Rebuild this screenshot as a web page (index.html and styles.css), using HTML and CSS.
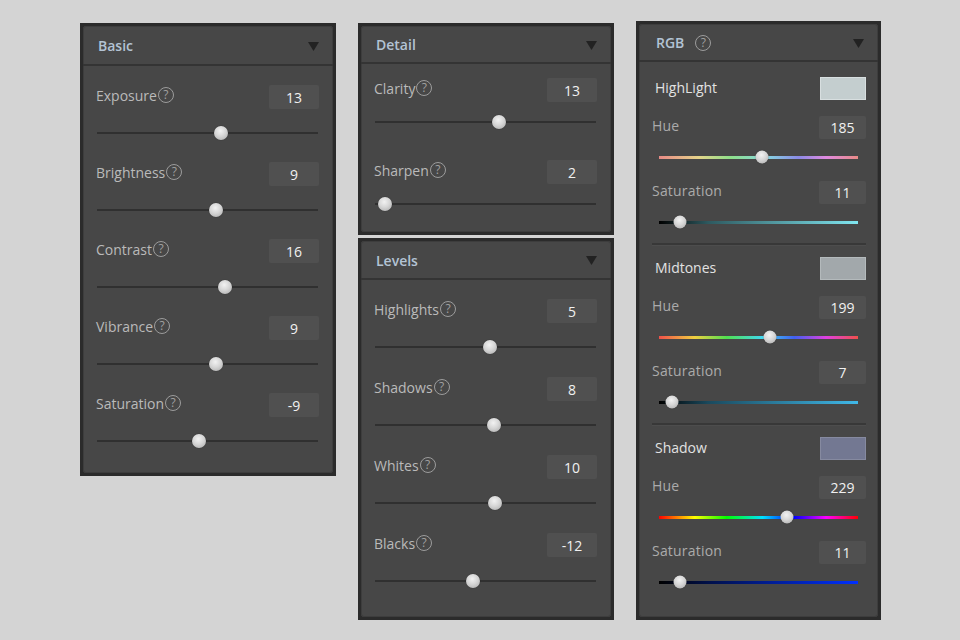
FILE: index.html
```html
<!DOCTYPE html>
<html>
<head>
<meta charset="utf-8">
<link rel="stylesheet" href="styles.css">
</head>
<body>
<div class="board">
  <!-- Basic -->
  <div class="panel basic">
    <div class="inner">
      <div class="phead"><span class="ptitle">Basic</span><svg class="caret" viewBox="0 0 11 9"><polygon points="0,0 11,0 5.5,9"/></svg></div>
      <div class="pbody">
        <div class="row">
          <div class="rhead"><span class="lbl">Exposure<span class="q">?</span></span><span class="val">13</span></div>
          <div class="slider"><div class="track"><span class="thumb" style="left:56.1%"></span></div></div>
        </div>
        <div class="row">
          <div class="rhead"><span class="lbl">Brightness<span class="q">?</span></span><span class="val">9</span></div>
          <div class="slider"><div class="track"><span class="thumb" style="left:53.8%"></span></div></div>
        </div>
        <div class="row">
          <div class="rhead"><span class="lbl">Contrast<span class="q">?</span></span><span class="val">16</span></div>
          <div class="slider"><div class="track"><span class="thumb" style="left:57.9%"></span></div></div>
        </div>
        <div class="row">
          <div class="rhead"><span class="lbl">Vibrance<span class="q">?</span></span><span class="val">9</span></div>
          <div class="slider"><div class="track"><span class="thumb" style="left:53.8%"></span></div></div>
        </div>
        <div class="row">
          <div class="rhead"><span class="lbl">Saturation<span class="q">?</span></span><span class="val">-9</span></div>
          <div class="slider"><div class="track"><span class="thumb" style="left:46.2%"></span></div></div>
        </div>
      </div>
    </div>
  </div>

  <div class="col">
    <!-- Detail -->
    <div class="panel detail">
      <div class="inner">
        <div class="phead"><span class="ptitle">Detail</span><svg class="caret" viewBox="0 0 11 9"><polygon points="0,0 11,0 5.5,9"/></svg></div>
        <div class="pbody">
          <div class="row">
            <div class="rhead"><span class="lbl">Clarity<span class="q">?</span></span><span class="val">13</span></div>
            <div class="slider"><div class="track"><span class="thumb" style="left:56.1%"></span></div></div>
          </div>
          <div class="row">
            <div class="rhead"><span class="lbl">Sharpen<span class="q">?</span></span><span class="val">2</span></div>
            <div class="slider"><div class="track"><span class="thumb" style="left:4.7%"></span></div></div>
          </div>
        </div>
      </div>
    </div>
    <!-- Levels -->
    <div class="panel levels">
      <div class="inner">
        <div class="phead"><span class="ptitle">Levels</span><svg class="caret" viewBox="0 0 11 9"><polygon points="0,0 11,0 5.5,9"/></svg></div>
        <div class="pbody">
          <div class="row">
            <div class="rhead"><span class="lbl">Highlights<span class="q">?</span></span><span class="val">5</span></div>
            <div class="slider"><div class="track"><span class="thumb" style="left:52%"></span></div></div>
          </div>
          <div class="row">
            <div class="rhead"><span class="lbl">Shadows<span class="q">?</span></span><span class="val">8</span></div>
            <div class="slider"><div class="track"><span class="thumb" style="left:53.8%"></span></div></div>
          </div>
          <div class="row">
            <div class="rhead"><span class="lbl">Whites<span class="q">?</span></span><span class="val">10</span></div>
            <div class="slider"><div class="track"><span class="thumb" style="left:54.3%"></span></div></div>
          </div>
          <div class="row">
            <div class="rhead"><span class="lbl">Blacks<span class="q">?</span></span><span class="val">-12</span></div>
            <div class="slider"><div class="track"><span class="thumb" style="left:44.2%"></span></div></div>
          </div>
        </div>
      </div>
    </div>
  </div>

  <!-- RGB -->
  <div class="panel rgb">
    <div class="inner">
      <div class="phead"><span class="ptitle">RGB<span class="q hq">?</span></span><svg class="caret" viewBox="0 0 11 9"><polygon points="0,0 11,0 5.5,9"/></svg></div>
      <div class="pbody">
        <div class="sec">
          <div class="chead"><span class="clbl">HighLight</span><span class="swatch sw-hi"></span></div>
          <div class="rrow">
            <div class="rhead"><span class="rlbl">Hue</span><span class="val">185</span></div>
            <div class="rslider"><div class="bar hue-hi"><span class="thumb" style="left:51.8%"></span></div></div>
          </div>
          <div class="rrow">
            <div class="rhead"><span class="rlbl">Saturation</span><span class="val">11</span></div>
            <div class="rslider"><div class="bar sat-hi"><span class="thumb" style="left:10.6%"></span></div></div>
          </div>
        </div>
        <div class="sep"></div>
        <div class="sec">
          <div class="chead"><span class="clbl">Midtones</span><span class="swatch sw-mid"></span></div>
          <div class="rrow">
            <div class="rhead"><span class="rlbl">Hue</span><span class="val">199</span></div>
            <div class="rslider"><div class="bar hue-mid"><span class="thumb" style="left:55.6%"></span></div></div>
          </div>
          <div class="rrow">
            <div class="rhead"><span class="rlbl">Saturation</span><span class="val">7</span></div>
            <div class="rslider"><div class="bar sat-mid"><span class="thumb" style="left:6.7%"></span></div></div>
          </div>
        </div>
        <div class="sep"></div>
        <div class="sec">
          <div class="chead"><span class="clbl">Shadow</span><span class="swatch sw-sh"></span></div>
          <div class="rrow">
            <div class="rhead"><span class="rlbl">Hue</span><span class="val">229</span></div>
            <div class="rslider"><div class="bar hue-sh"><span class="thumb" style="left:64.3%"></span></div></div>
          </div>
          <div class="rrow">
            <div class="rhead"><span class="rlbl">Saturation</span><span class="val">11</span></div>
            <div class="rslider"><div class="bar sat-sh"><span class="thumb" style="left:10.7%"></span></div></div>
          </div>
        </div>
      </div>
    </div>
  </div>
</div>
</body>
</html>
```

FILE: styles.css
```css
* { box-sizing: border-box; }
html, body { margin: 0; padding: 0; }
body {
  width: 960px;
  height: 640px;
  background: #d4d4d4;
  font-family: "Open Sans", "Noto Sans", sans-serif;
  overflow: hidden;
}
.board {
  display: flex;
  align-items: flex-start;
  gap: 22px;
  padding: 21px 0 0 80px;
}
.col {
  display: flex;
  flex-direction: column;
  gap: 3px;
  margin-top: 2px;
}
.panel {
  background: #2b2b2b;
  padding: 3px;
}
.basic { width: 256px; margin-top: 2px; }
.detail, .levels { width: 256px; }
.rgb { width: 245px; }
.inner {
  background: #474747;
  border-radius: 3px;
  box-shadow: inset 0 0 0 1px #3d3d3d;
}
.phead {
  height: 37px;
  border-bottom: 2px solid #343434;
  display: flex;
  align-items: center;
  justify-content: space-between;
  padding: 1px 14px 0 15px;
  box-sizing: content-box;
}
.detail .phead, .rgb .phead { height: 35px; }
.levels .phead { height: 36px; }
.rgb .phead { padding-left: 17px; }
.ptitle {
  font-size: 14px;
  font-weight: 600;
  color: #b3c3d4;
  display: flex;
  align-items: center;
}
.caret { width: 11px; height: 9px; fill: #222222; margin-top: 1px; }

.pbody { padding: 19px 14px 8px 13px; }
.detail .pbody { padding: 14px 14px 8px 13px; }
.levels .pbody { padding: 19px 14px 12px 13px; }

.row { display: flex; flex-direction: column; margin-bottom: 5px; }
.row:last-child { margin-bottom: 0; }
.levels .row { margin-bottom: 6px; }
.levels .row:last-child { margin-bottom: 0; }
.detail .row { margin-bottom: 18px; }
.detail .row:last-child { margin-bottom: 0; }

.rhead {
  height: 24px;
  display: flex;
  align-items: center;
  justify-content: space-between;
}
.lbl {
  font-size: 14px;
  color: #bababa;
  display: flex;
  align-items: center;
  margin-top: -4px;
}
.q {
  display: inline-flex;
  align-items: center;
  justify-content: center;
  width: 16px;
  height: 16px;
  border: 1.4px solid #9c9c9c;
  border-radius: 50%;
  font-size: 12px;
  font-weight: 400;
  color: #a0a0a0;
  margin-left: 1px;
  line-height: 1;
}
.hq { margin-left: 11px; }
.val {
  width: 50px;
  height: 24px;
  background: #505050;
  border-radius: 2px;
  color: #f0f0f0;
  font-size: 14px;
  display: flex;
  align-items: center;
  justify-content: center;
}
.slider {
  height: 48px;
  display: flex;
  align-items: center;
  padding: 0 1px;
}
.detail .slider { height: 40px; }
.track {
  position: relative;
  flex: 1;
  height: 2px;
  background: #303030;
}
.thumb {
  position: absolute;
  top: 50%;
  width: 14px;
  height: 14px;
  border-radius: 50%;
  transform: translate(-50%, -50%);
  background: radial-gradient(circle at 45% 35%, #f2f2f2 0%, #d6d6d6 45%, #a8a8a8 100%);
  box-shadow: 0 0 1px rgba(0,0,0,0.5);
}

/* RGB */
.rgb .pbody { padding: 15px 12px 17px 13px; }
.chead {
  height: 23px;
  display: flex;
  align-items: center;
  justify-content: space-between;
  margin-bottom: 16px;
}
.clbl {
  font-size: 14px;
  color: #e2e2e2;
  padding-left: 3px;
  margin-top: -2px;
}
.swatch {
  width: 46px;
  height: 23px;
  border: 1px solid #8c8c8c;
}
.sw-hi { background: #c4cecf; border-color: #d8dfe0; }
.sw-mid { background: #a2a8ab; border-color: #b4babc; }
.sw-sh { background: #737892; border-color: #868aa0; }
.rrow { display: flex; flex-direction: column; margin-bottom: 6px; }
.rrow:last-child { margin-bottom: 0; }
.rgb .rhead { height: 23px; }
.rgb .val { width: 47px; height: 23px; }
.rlbl {
  font-size: 14px;
  color: #ababab;
  margin-top: -4px;
  letter-spacing: 0.2px;
}
.rslider {
  height: 36px;
  display: flex;
  align-items: center;
  padding: 0 8px 0 7px;
}
.bar {
  position: relative;
  flex: 1;
  height: 3px;
}
.bar .thumb { width: 13px; height: 13px; }
.hue-hi { background: linear-gradient(to right, #e88a86, #e5d48a 20%, #8ee08a 36%, #86d6e0 54%, #8a8ae6 70%, #e08ae0 84%, #e88a86); }
.hue-mid { background: linear-gradient(to right, #f0504a, #f0d040 18%, #50e050 34%, #40d8f0 52%, #4060f0 68%, #e040e0 84%, #f0504a); }
.hue-sh { background: linear-gradient(to right, #ff0000, #ffff00 18%, #00ff00 34%, #00e0ff 52%, #0000ff 68%, #ff00ff 84%, #ff0000); }
.sat-hi { background: linear-gradient(to right, #000000, #2e5a60 25%, #80e6f0); }
.sat-mid { background: linear-gradient(to right, #000000, #1a4a5e 25%, #40b8e8); }
.sat-sh { background: linear-gradient(to right, #000000, #00104a 25%, #0030ff); }
.sep {
  height: 2px;
  background: #383838;
  margin: 3px 0 12px;
  box-shadow: 0 1px 0 #4d4d4d;
}
```
